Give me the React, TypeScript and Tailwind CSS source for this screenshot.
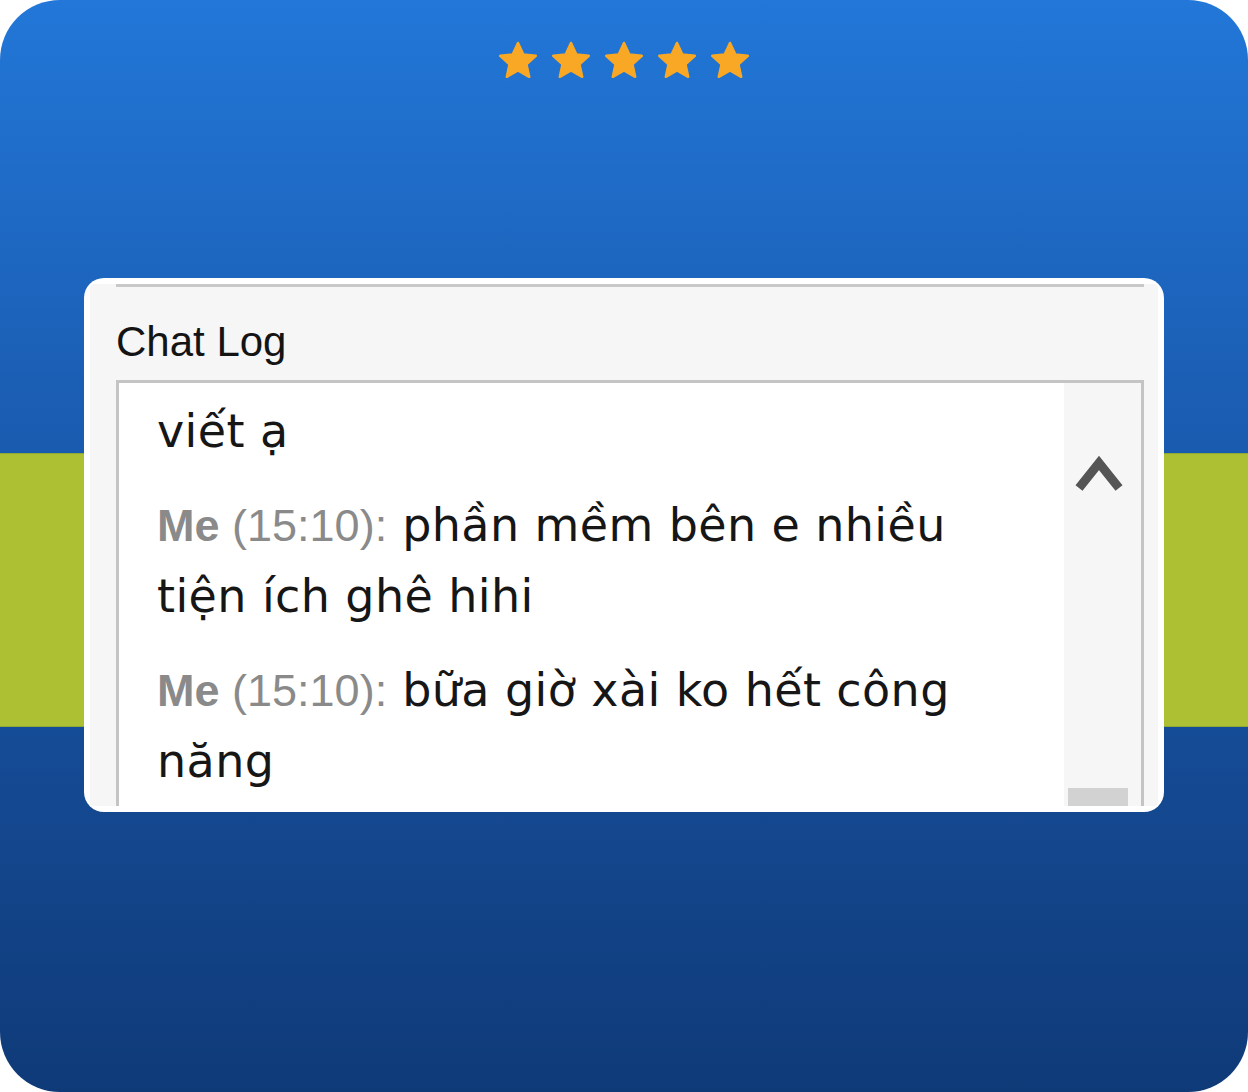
import React from 'react'

const msgFont = { fontFamily: '"DejaVu Sans", Verdana, sans-serif' }
const labelFont = { fontFamily: '"Liberation Sans", Arial, sans-serif' }

function Star() {
  return (
    <svg width="46" height="44" viewBox="0 0 24 24" className="block">
      <path
        d="M12 2.2l2.9 6.3 6.8.7-5.1 4.6 1.5 6.8L12 17.1l-6.1 3.5 1.5-6.8-5.1-4.6 6.8-.7z"
        fill="#f9a825"
        stroke="#f9a825"
        strokeWidth="1.4"
        strokeLinejoin="round"
      />
    </svg>
  )
}

function Message({ who, time, first, rest }: { who: string; time: string; first: string; rest: string }) {
  return (
    <p className="mt-[24px] text-[46px] leading-[70px] tracking-[0.4px] text-[#161616]" style={msgFont}>
      <span className="text-[45px] tracking-normal text-[#8a8a8a]" style={labelFont}>
        <span className="font-bold">{who}</span> ({time}):
      </span>{' '}
      {first}
      <br />
      {rest}
    </p>
  )
}

export default function App() {
  return (
    <div className="relative w-[1248px] h-[1092px] overflow-hidden rounded-[60px] bg-gradient-to-b from-[#2277d8] via-[#1855a6] to-[#0f3a78]">
      {/* green band behind the card */}
      <div className="absolute left-0 right-0 top-[453px] h-[274px] bg-[#adc033] border-y border-[#8ea737]" />

      <div className="relative flex flex-col">
        <div className="flex justify-center gap-[7px] pt-[39px]">
          <Star />
          <Star />
          <Star />
          <Star />
          <Star />
        </div>

        <div className="mx-[84px] mt-[195px] h-[534px] rounded-[20px] bg-white p-[6px]">
          <div className="h-full overflow-hidden rounded-[4px] bg-[#f6f6f6] pl-[26px] pr-[14px]">
            <div className="h-[3px] bg-[#c8c8c8]" />
            <div className="mt-[30px] text-[42px] leading-[50px] text-[#141414]" style={labelFont}>
              Chat Log
            </div>
            <div className="mt-[13px] flex h-[426px] border-x-[3px] border-t-[3px] border-[#c4c4c4] bg-white">
              <div className="flex-1 pl-[38px] pt-[13px]">
                <p className="text-[46px] leading-[70px] tracking-[0.4px] text-[#161616]" style={msgFont}>
                  viết ạ
                </p>
                <Message who="Me" time="15:10" first="phần mềm bên e nhiều" rest="tiện ích ghê hihi" />
                <Message who="Me" time="15:10" first="bữa giờ xài ko hết công" rest="năng" />
              </div>
              <div className="flex w-[77px] flex-col items-center bg-[#f6f6f6]">
                <svg width="48" height="40" viewBox="0 0 48 40" className="mt-[70px] mr-[7px]">
                  <polyline points="4,35 24,10 44,35" fill="none" stroke="#555555" strokeWidth="9" />
                </svg>
                <div className="mt-auto mr-[10px] h-[18px] w-[60px] bg-[#d2d2d2]" />
              </div>
            </div>
          </div>
        </div>
      </div>
    </div>
  )
}
